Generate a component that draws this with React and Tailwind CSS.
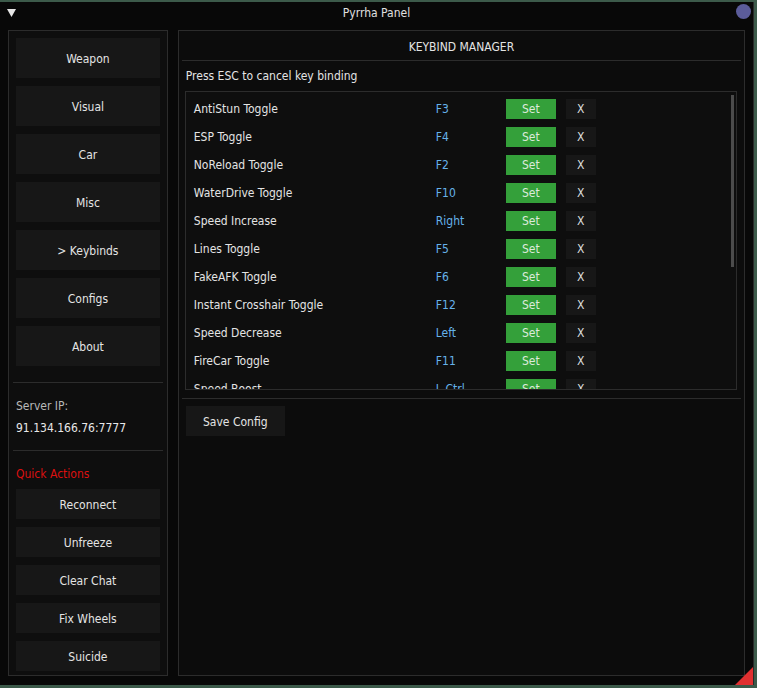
import React from 'react';

const navItems = ['Weapon', 'Visual', 'Car', 'Misc', '> Keybinds', 'Configs', 'About'];
const quickActions = ['Reconnect', 'Unfreeze', 'Clear Chat', 'Fix Wheels', 'Suicide'];

const binds = [
  ['AntiStun Toggle', 'F3'],
  ['ESP Toggle', 'F4'],
  ['NoReload Toggle', 'F2'],
  ['WaterDrive Toggle', 'F10'],
  ['Speed Increase', 'Right'],
  ['Lines Toggle', 'F5'],
  ['FakeAFK Toggle', 'F6'],
  ['Instant Crosshair Toggle', 'F12'],
  ['Speed Decrease', 'Left'],
  ['FireCar Toggle', 'F11'],
  ['Speed Boost', 'L-Ctrl'],
  ['Teleport Waypoint', 'F7'],
];

function BindRow({ name, keyName }) {
  return (
    <div className="flex items-center h-5 shrink-0">
      <div className="w-[250px] pl-[8px] text-[#e4e4e4]">{name}</div>
      <div className="w-[70px] text-[#66b2ea]">{keyName}</div>
      <button className="w-[50px] h-5 bg-[#34a03a] text-[#dceadb]">Set</button>
      <button className="ml-[10px] w-[30px] h-5 bg-[#171717] text-[#dcdcdc]">X</button>
    </div>
  );
}

export default function App() {
  return (
    <div
      className="w-[757px] h-[688px] bg-[#3c5a4a] pt-[2px] text-[12px] text-[#e0e0e0] overflow-hidden"
      style={{ fontFamily: '"DejaVu Sans Condensed", "DejaVu Sans", sans-serif' }}
    >
      <div className="relative w-[754px] h-[683px] bg-[#080808] border-r border-[#2a2a2a] flex flex-col">
        {/* title bar */}
        <div className="relative h-[23px] flex items-center justify-center shrink-0">
          <svg className="absolute left-[7px] top-[7px]" width="9" height="8" viewBox="0 0 9 8">
            <polygon points="0,0 9,0 4.5,8" fill="#e6e6e6" />
          </svg>
          <span className="text-[#e0e0e0] -mt-[2px]">Pyrrha Panel</span>
          <div className="absolute right-[2px] top-[2px] w-[15px] h-[15px] rounded-full bg-[#5b5c9a]" />
        </div>

        <div className="flex gap-[10px] pl-2 pr-2 pt-[5px]">
          {/* left column */}
          <div className="w-[160px] h-[646px] bg-[#0e0e0e] border border-[#2c2c2c] flex flex-col px-[7px] pt-[7px]">
            <div className="flex flex-col gap-2">
              {navItems.map((n) => (
                <div key={n} className="h-10 bg-[#171717] flex items-center justify-center pt-[1px] text-[#e4e4e4]">
                  {n}
                </div>
              ))}
            </div>
            <div className="h-px bg-[#2c2c2c] -mx-[3px] mt-[16px]" />
            <div className="mt-[14px] text-[#b8b8b8]">Server IP:</div>
            <div className="mt-[4px] text-[#e8e8e8]">91.134.166.76:7777</div>
            <div className="h-px bg-[#2c2c2c] -mx-[3px] mt-[13px]" />
            <div className="mt-[14px] text-[#dd1010]">Quick Actions</div>
            <div className="flex flex-col gap-2 mt-[6px]">
              {quickActions.map((n) => (
                <div key={n} className="h-[30px] bg-[#171717] flex items-center justify-center pt-[1px] text-[#e4e4e4]">
                  {n}
                </div>
              ))}
            </div>
          </div>

          {/* right column */}
          <div className="w-[568px] h-[646px] bg-[#0c0c0c] border border-[#2c2c2c] flex flex-col px-[3px]">
            <div className="h-[29px] flex items-center justify-center text-[#e4e4e4] pt-[2px]">KEYBIND MANAGER</div>
            <div className="h-px bg-[#2c2c2c]" />
            <div className="pl-[4px] mt-[6px] text-[#e4e4e4]">Press ESC to cancel key binding</div>
            <div className="relative ml-[3px] mt-[6px] w-[552px] h-[299px] bg-[#0e0e0e] border border-[#2c2c2c] overflow-hidden">
              <div className="flex flex-col gap-2 pt-[7px]">
                {binds.map(([n, k]) => (
                  <BindRow key={n} name={n} keyName={k} />
                ))}
              </div>
              <div className="absolute right-[2px] top-[3px] w-[3px] h-[172px] bg-[#4c4c4c]" />
            </div>
            <div className="h-px bg-[#2c2c2c] mt-[8px]" />
            <button className="ml-[4px] mt-[7px] w-[99px] h-[30px] bg-[#171717] pt-[1px] text-[#e4e4e4]">Save Config</button>
          </div>
        </div>

        <svg className="absolute right-0 bottom-0" width="18" height="18" viewBox="0 0 18 18">
          <polygon points="18,0 18,18 0,18" fill="#e03030" />
        </svg>
      </div>
    </div>
  );
}
